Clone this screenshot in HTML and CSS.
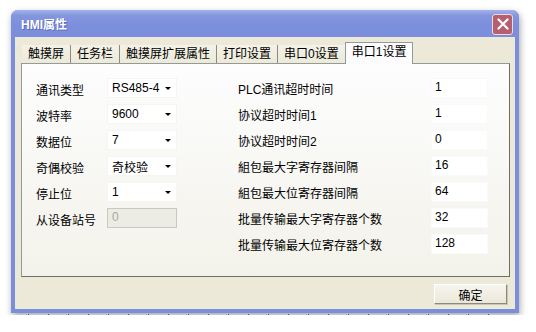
FILE: index.html
```html
<!DOCTYPE html>
<html lang="zh-CN">
<head>
    <meta charset="UTF-8">
    <title>HMI属性</title>
    <link rel="stylesheet" href="styles.css">
</head>
<body>
    <div class="window">
        <div class="titlebar">
            <span class="title">HMI属性</span>
            <span class="close-btn">
                <svg width="12" height="12" viewBox="0 0 12 12"><path d="M1.5 1.5 L10.5 10.5 M10.5 1.5 L1.5 10.5" stroke="#fff" stroke-width="2.2" stroke-linecap="round"/></svg>
            </span>
        </div>
        <div class="client">
            <div class="tabs">
                <div class="tab">触摸屏</div>
                <div class="tab">任务栏</div>
                <div class="tab">触摸屏扩展属性</div>
                <div class="tab">打印设置</div>
                <div class="tab">串口0设置</div>
                <div class="tab active">串口1设置</div>
            </div>
            <div class="panel">
                <div class="col left">
                    <div class="row"><label>通讯类型</label><div class="combo"><span>RS485-4</span><i class="arrow"></i></div></div>
                    <div class="row"><label>波特率</label><div class="combo"><span>9600</span><i class="arrow"></i></div></div>
                    <div class="row"><label>数据位</label><div class="combo"><span>7</span><i class="arrow"></i></div></div>
                    <div class="row"><label>奇偶校验</label><div class="combo"><span>奇校验</span><i class="arrow"></i></div></div>
                    <div class="row"><label>停止位</label><div class="combo"><span>1</span><i class="arrow"></i></div></div>
                    <div class="row"><label>从设备站号</label><input class="field disabled" type="text" value="0" disabled></div>
                </div>
                <div class="col right">
                    <div class="row"><label>PLC通讯超时时间</label><input class="field" type="text" value="1"></div>
                    <div class="row"><label>协议超时时间1</label><input class="field" type="text" value="1"></div>
                    <div class="row"><label>协议超时时间2</label><input class="field" type="text" value="0"></div>
                    <div class="row"><label>組包最大字寄存器间隔</label><input class="field" type="text" value="16"></div>
                    <div class="row"><label>組包最大位寄存器间隔</label><input class="field" type="text" value="64"></div>
                    <div class="row"><label>批量传输最大字寄存器个数</label><input class="field" type="text" value="32"></div>
                    <div class="row last"><label>批量传输最大位寄存器个数</label><input class="field" type="text" value="128"></div>
                </div>
            </div>
            <div class="footer">
                <button class="ok-btn">确定</button>
            </div>
        </div>
    </div>
    <div class="dots"></div>
</body>
</html>
```

FILE: styles.css
```css
/* General */
body {
    margin: 0;
    background: #fff;
    font-family: "Liberation Sans", "Noto Sans CJK SC", sans-serif;
    font-size: 12px;
    color: #000;
}

/* Window frame */
.window {
    margin: 10px 0 0 11px;
    width: 508px;
    box-sizing: border-box;
    padding: 0 4px 4px;
    background: #7b8edc;
    border-radius: 7px 7px 0 0;
    box-shadow: 1px 3px 7px rgba(0, 0, 0, 0.35);
}

.titlebar {
    margin: 0 -4px;
    height: 27px;
    padding: 0 6px 0 10px;
    display: flex;
    align-items: center;
    justify-content: space-between;
    border-radius: 7px 7px 0 0;
    background: linear-gradient(#a3b2ec, #8596de 20%, #7b8edc 60%, #7d8fdc);
}

.title {
    color: #fff;
    font-weight: bold;
    font-size: 12px;
    text-shadow: 1px 1px 0 #5a6cb8;
}

.close-btn {
    width: 19px;
    height: 19px;
    margin-top: 1px;
    display: flex;
    align-items: center;
    justify-content: center;
    background: #b6606f;
    border: 1px solid #eadbe2;
    border-radius: 3px;
}

.client {
    height: 272px;
    box-sizing: border-box;
    padding: 5px 5px 5px 6px;
    background: #ece9d8;
    display: flex;
    flex-direction: column;
}

/* Tabs */
.tabs {
    display: flex;
    height: 21px;
    align-items: flex-end;
    padding-left: 1px;
}

.tab {
    height: 18px;
    line-height: 18px;
    padding: 0 6px;
    border-right: 1px solid #8d8a7e;
    background: linear-gradient(#f4f2e8, #ece9d8);
}

.tab.active {
    height: 21px;
    line-height: 19px;
    margin-left: -1px;
    margin-bottom: -1px;
    padding: 0 6px;
    background: #fcfcfe;
    border: 1px solid #919b9c;
    border-bottom: 0;
    position: relative;
    z-index: 1;
}

.panel {
    height: 214px;
    box-sizing: border-box;
    padding: 14px 0 0 14px;
    display: flex;
    gap: 61px;
    border: 1px solid #919b9c;
    border-right-color: #6f6e66;
    border-bottom-color: #6f6e66;
    background: linear-gradient(#fdfdfe, #f3f2ea);
}

/* Form rows */
.row {
    display: flex;
    align-items: center;
    height: 20px;
    margin-bottom: 6px;
}

.row.last {
    margin-top: 2px;
}

.left label {
    width: 71px;
    padding-top: 3px;
}

.right label {
    width: 193px;
}

.combo {
    width: 70px;
    height: 20px;
    box-sizing: border-box;
    padding: 0 5px 0 4px;
    display: flex;
    align-items: center;
    justify-content: space-between;
    background: #fff;
    border: 1px solid #f6f5f0;
}

.arrow {
    border-left: 3px solid transparent;
    border-right: 3px solid transparent;
    border-top: 3px solid #000;
}

.field {
    width: 57px;
    height: 20px;
    box-sizing: border-box;
    padding: 0 3px 2px;
    border: 1px solid #fafafa;
    background: #fff;
    font: inherit;
    color: #000;
    outline: none;
}

.field.disabled {
    width: 70px;
    padding-left: 4px;
    background: #ecebe4;
    border: 1px solid #cbc8bc;
    color: #aca899;
}

/* Footer button */
.footer {
    display: flex;
    justify-content: flex-end;
    margin-top: 7px;
    padding-right: 3px;
}

.ok-btn {
    width: 73px;
    height: 20px;
    padding: 0;
    font: inherit;
    color: #000;
    background: linear-gradient(#f6f5ee, #ebe8da);
    border: 1px solid #fff;
    border-right-color: #8c8a7f;
    border-bottom-color: #8c8a7f;
    box-shadow: 1px 1px 0 #c9c6b6;
}

/* Screenshot artifact under the window */
.dots {
    margin: 1px 0 0 28px;
    width: 476px;
    height: 1px;
    background: linear-gradient(to right, #555 1px, transparent 1px) 0 0 / 20px 1px repeat-x;
}
```
